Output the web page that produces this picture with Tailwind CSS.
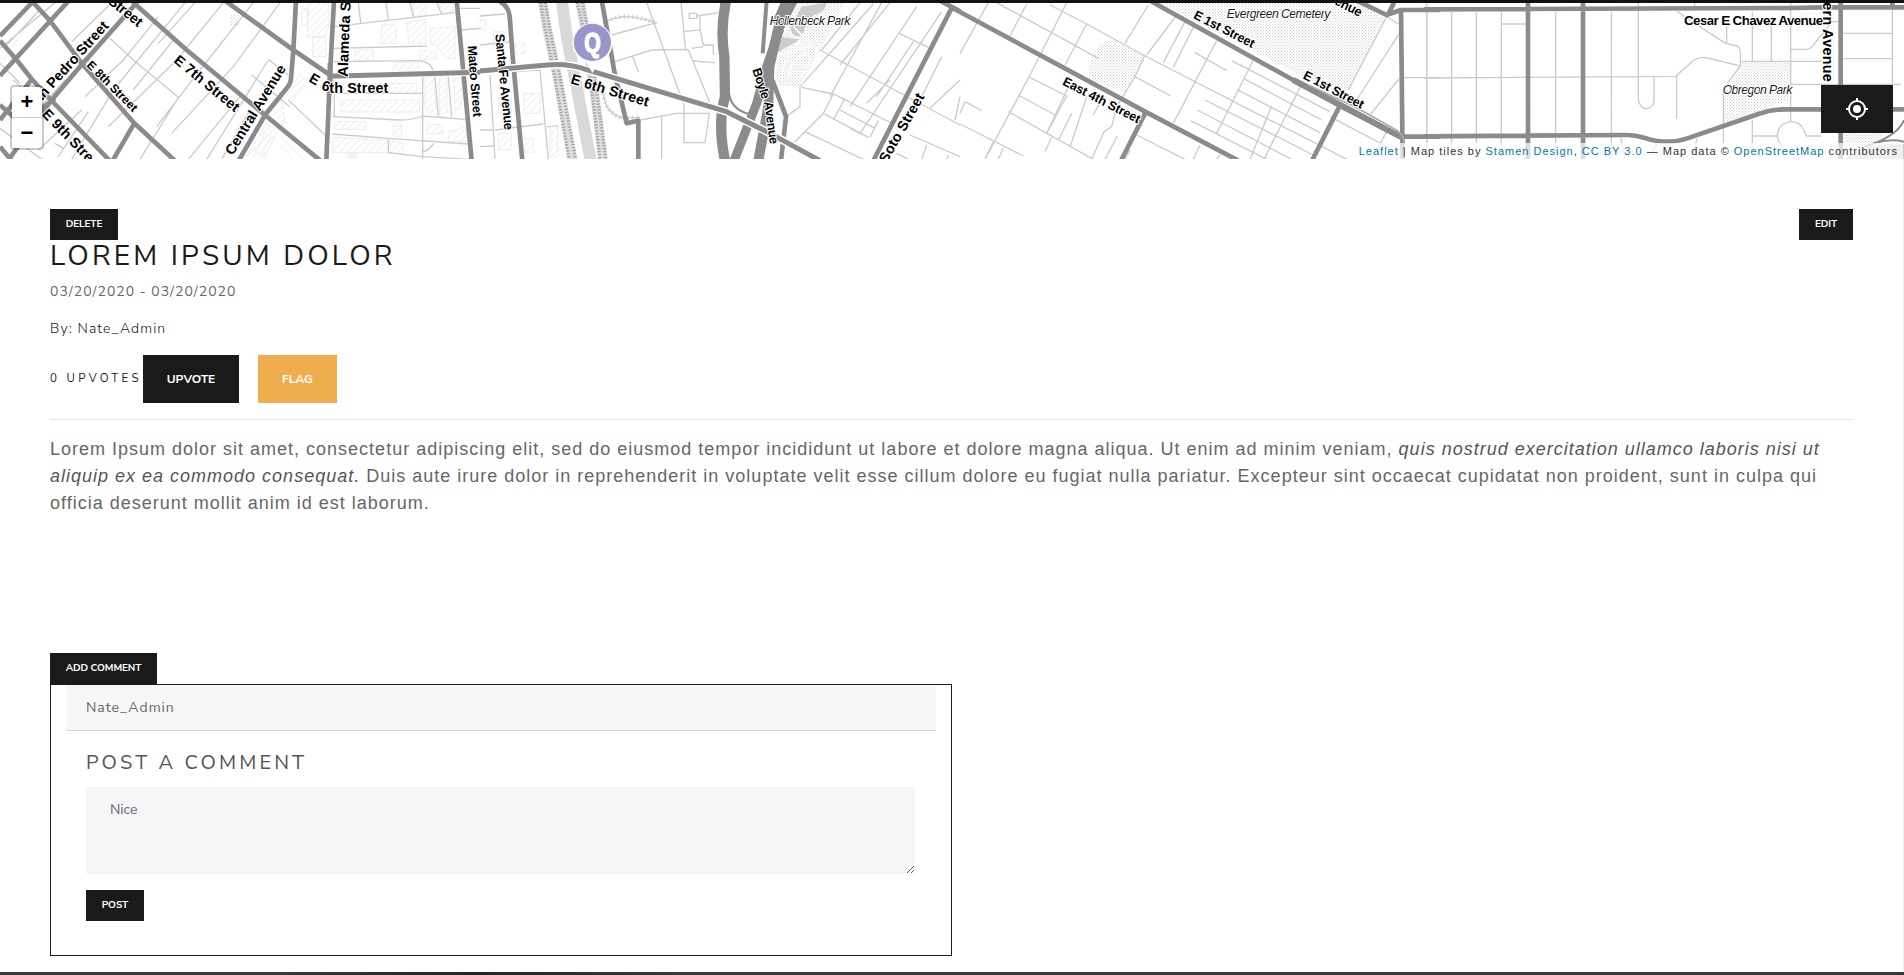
<!DOCTYPE html>
<html lang="en">
<head>
<meta charset="utf-8">
<title>Lorem Ipsum Dolor</title>
<script src="https://cdn.jsdelivr.net/npm/@tailwindcss/browser@4"></script>
</head>
<body class="h-[975px] overflow-hidden bg-white font-['Nunito_Sans',Lato,sans-serif] text-[#1a1a1a]">
<div class="flex h-[975px] flex-col border-r border-[#efefef]">
  <div class="h-[3px] w-[1904px] shrink-0 bg-[#111]"></div>

  <section class="relative h-[156px] w-[1904px] shrink-0 overflow-hidden">
    <svg class="block h-[156px] w-[1904px]" viewBox="0 3 1904 156" fill="none" font-family="'Liberation Sans', Arial, sans-serif">
      <defs>
        <pattern id="dots" width="9" height="9" patternUnits="userSpaceOnUse"><rect x="0" y="0" width="3" height="3" fill="#cfcfcf"/><rect x="4.5" y="4.5" width="3" height="3" fill="#cfcfcf"/></pattern>
        <pattern id="hatch" width="22" height="22" patternUnits="userSpaceOnUse"><path d="M-2 24L24 -2" stroke="#dcdcdc" stroke-width="2"/></pattern>
      </defs>
      <rect width="1904" height="162" fill="#fff"/>

      <!-- downtown -->
      <g transform="scale(.33333)">
        <g fill="url(#hatch)" stroke="#e6e6e6" stroke-width="2">
          <path d="M925 8H985V80L975 112H922ZM938 110H978V170H938ZM905 25H923V76H905ZM1145 75L1188 72V130H1142ZM1222 66L1278 58V130L1226 132ZM1290 85L1365 80V175H1335L1310 135H1292ZM1238 8H1278V45L1242 50ZM1318 10H1360V36H1322ZM1065 150H1120V180H1065ZM1180 188L1255 186V214H1180ZM1025 300H1258V336H1022ZM1275 230H1300L1308 325L1290 340L1275 325ZM1318 230H1340V350H1318ZM1360 235H1385V325L1365 330ZM1282 372L1328 374V402H1280ZM1345 395L1400 380V425H1345ZM1180 375H1205V408H1180ZM998 412L1165 420V458H998ZM1170 420L1210 430V460H1170ZM1003 250H1250V280H1003ZM1260 150L1310 158V178H1260ZM1003 365H1098V388H1003Z"/>
          <path d="M860 285L900 225L922 240L875 305M810 320L845 300L855 370L830 380M850 395L930 460M845 415L905 472M840 435L880 478M740 470L800 370L835 390L790 478M760 470L800 395M780 470L815 405M10 180L110 30M30 195L140 65"/>
        </g>
        <g stroke="#cbcbcb" stroke-width="4">
          <path d="M0 145L165 8M20 135L120 30M215 125L335 8M330 115L400 180L535 292M535 292L420 478M195 240L70 380M555 8L340 270L215 478M245 330L115 450M475 50L370 180L255 290M520 120L400 270M585 8L475 130M670 8L530 180L325 380M760 8L600 210L470 380M840 8L700 200L515 400M720 290L565 478M805 180L620 478M750 330L665 478M865 300L975 405M755 225L870 320M805 178L865 225M40 240L125 320M0 385L125 478M60 250L0 190M120 330L40 430M165 430L190 445M175 470L265 335"/>
          <path d="M1000 80L1365 38M1075 8L1082 68M1158 8L1165 58M1230 8L1240 50M1310 8L1325 42M1000 145L1282 138M1000 185L1255 182Q1295 185 1300 215M1268 225V478M1003 280H1268M998 350L1200 360Q1240 360 1268 348L1395 358M998 402L1165 415L1405 432M1165 418V458L1268 470L1410 478M1305 230L1315 350M1345 230L1355 350M1003 232V350M1270 455Q1290 450 1300 430M1375 25H1440M1380 90L1440 85"/>
        </g>
        <path d="M690 45h30v30h-30zM1042 460h30v18h-30z" fill="url(#dots)"/>
        <g stroke="#8b8b8b" stroke-width="14" stroke-linejoin="round">
          <path d="M98 6L0 108M203 6L0 227M98 6L150 62L245 190L403 370L528 485M0 122L50 180L95 237L150 297L332 485M412 6L240 200L155 300L25 480M95 238L0 360M0 440L35 482M0 315L40 350M398 6L560 150L795 345L965 485M404 368L338 482M675 2L880 150L990 225M888 2L880 152L873 235Q873 250 860 265L795 345L716 482M1002 2L990 225L979 482M1370 2L1390 215L1415 482M165 295L120 330"/>
          <path d="M985 229L1440 217" stroke="#fff" stroke-width="20"/>
          <path d="M985 229L1440 217M990 190V260" stroke-width="15"/>
        </g>
      </g>

      <!-- river and Boyle Heights -->
      <g transform="translate(480 0) scale(.33333)">
        <g stroke="#cbcbcb" stroke-width="4">
          <path d="M500 8L610 310M603 8L617 150L625 150L690 310M405 185L515 150L620 148M395 105L530 68M458 170L475 215M628 40h22v15h-22zM650 48L715 38M610 95L660 90V48M660 90L670 135L700 135V165M635 145L670 140M640 183L705 188M480 360L590 340L688 340L675 428H612V310M545 350V478M0 48L75 42M0 135L90 125M30 225L45 478M45 390L190 372M180 210L205 478M0 440L45 438M200 380L235 378M0 390H40M100 215L180 210"/>
          <path d="M1140 8L1025 150M1180 12L1045 165L960 260M1230 8L1080 195M1310 20L1110 320M1385 35L1140 400L1110 385M1020 150L1440 375M1258 100L1345 142M1300 125L1190 290M1205 8L1050 290M1385 170L1310 320M1440 240L1350 325M960 260V320L918 350M965 262L1060 282L1240 372M1060 282L1030 340L930 440M1095 295L1060 360M1080 330L1185 385M1030 340L1165 412M975 395L1150 478M1195 362L1170 412M1290 405L1440 470M1340 435L1325 478M1405 465L1400 478M1250 460L1285 478M1440 290L1425 360M1230 240L1160 310"/>
          <path d="M748 285Q755 325 800 340Q825 345 820 372" stroke="#8b8b8b" stroke-width="6"/>
        </g>
        <g stroke="#e6e6e6" stroke-width="2" fill="url(#hatch)"><path d="M105 130h28v32h-28zM132 280H180V340H132ZM55 290h38v50h-38zM55 400h40v50h-40zM210 380h24v90h-24zM135 415h25v42h-25zM0 60h18v30H0zM40 95h35v50h-35z"/></g>
        <path d="M950 8L1092 8L1022 150L960 258H905L885 240L900 130Z" fill="url(#dots)"/>
        <path d="M965 20L1040 8Q1035 40 1000 45L980 70L965 110L940 105L930 85ZM905 112L960 118L890 160Z" fill="#ccc"/>
        <path d="M905 240Q905 195 925 170Q960 135 1010 140Q1015 180 965 250M925 235Q930 190 955 170Q985 155 990 180Q985 215 945 240M940 80L1000 140M890 165Q940 165 960 120" stroke="#fff" stroke-width="5"/>
        <path d="M188 8L200 80L232 230L278 482M300 8L315 85L345 290L370 482" stroke="#dedede" stroke-width="28"/>
        <path d="M182 8L194 80L224 230L268 482M196 8L208 80L240 230L288 482M292 8L310 85L338 290L360 482M308 8L322 85L352 290L378 482" stroke="#a2a2a2" stroke-width="10" stroke-dasharray="4 5"/>
        <path d="M245 2L262 120L290 260L332 482" stroke="#d9d9d9" stroke-width="36"/>
        <path d="M370 70Q430 30 530 70M370 280Q375 340 430 355L480 352" stroke="#c8c8c8" stroke-width="4"/>
        <path d="M370 70Q430 30 530 70M370 280Q375 340 430 355L480 352" stroke="#c8c8c8" stroke-width="13" stroke-dasharray="3 10"/>
        <g stroke="#8b8b8b" stroke-width="14" stroke-linejoin="round">
          <path d="M365 2L385 110L403 215L440 370L475 362V482"/>
          <path d="M60 5Q88 18 90 60L98 170L127 482"/>
          <path d="M860 2L848 160" stroke-width="12"/>
          <path d="M738 2Q720 90 733 170L735 290Q712 370 735 482" stroke-width="31"/>
          <path d="M938 2L895 85L868 200L865 320L835 482" stroke-width="30"/>
          <path d="M900 85L860 200L830 310L762 482" stroke-width="27"/>
          <path d="M926 2L895 75" stroke-width="40"/>
          <path d="M877 240L918 350L903 482M1416 22L1180 482M1380 2L1440 34"/>
          <path d="M0 213L200 195Q260 188 320 209L740 335L870 400L1020 482" stroke="#fff" stroke-width="24"/>
          <path d="M0 213L200 195Q260 188 320 209L740 335L870 400L1020 482" stroke-width="15"/>
        </g>
      </g>

      <!-- East 4th / East 1st -->
      <g transform="translate(960 0) scale(.33333)">
        <path d="M640 8H1200L1280 50L1165 270L1040 235L600 10ZM455 118L560 165L500 280L385 235L390 180L420 130Z" fill="url(#dots)"/>
        <g stroke="#cbcbcb" stroke-width="4">
          <path d="M85 8L0 160M200 12L150 108M320 8L210 225L75 478M110 8L275 98L415 175M270 15L380 72L550 165L890 340L1110 452L1160 478M380 72L315 195M565 15L495 130M555 165L525 230L470 320M650 45L560 165M675 65L610 188M702 78L640 202M770 122L640 370M880 180L770 400M815 182L1110 335M850 235L1085 360M830 268L1080 398M735 300L1060 465M712 330L995 478M692 362L920 478M705 158L800 212M525 230L632 288M1020 262L912 478M205 230L320 288L260 400M175 285L285 345M145 335L400 478M330 250L260 400M335 340L295 420M380 290L330 440M275 412L255 455M430 290L400 345M470 320L455 380L432 395L395 478M472 408L435 478M0 372L190 468M15 305L65 332M15 305L0 340M130 445L115 478M100 425L75 478M530 405L675 478M720 435L700 478M495 478L510 450M1315 72L1280 50L1165 270M1318 100L1190 300M1318 235L1230 345M1280 395L1235 478M1110 350L1300 450M935 318L870 478M780 465L770 478"/>
          <path d="M1400 8V430M1330 233H1440"/>
        </g>
        <g stroke="#8b8b8b" stroke-width="14" stroke-linejoin="round">
          <path d="M-30 20L0 36L560 337L835 482M570 2L1140 318L1328 414M558 335L483 482M1140 316L1056 482M1180 -3L1280 45L1322 30H1440M1302 8L1285 42M1323 25L1328 482M1328 410H1440"/>
          <path d="M1000 240L1325 412" stroke-width="18"/>
          <path d="M1045 255L1180 318L1300 385Q1330 400 1332 425" stroke="#a9a9a9" stroke-width="5"/>
        </g>
      </g>

      <!-- East LA grid -->
      <g transform="translate(1424 0) scale(.33333)">
        <path d="M950 185H1100V300L900 370V280L950 200ZM1258 400H1385L1350 435H1258Z" fill="url(#dots)"/>
        <g stroke="#cbcbcb" stroke-width="4">
          <path d="M8 35V478M83 35V478M157 35V478M232 35V478M395 35V478M562 35V478M0 234L755 229L805 184Q825 168 850 174L945 197M232 72H305M643 8V300Q650 326 667 326Q690 323 690 300V229M758 229V357M760 35Q840 90 905 130L940 138Q949 142 949 160V197L910 250M908 60V128M985 35V184M1042 75V184M1100 8V365M949 184H1192M1100 148H1145Q1160 148 1168 135L1225 65H1245M1100 253H1430M1258 100H1405M1258 176H1405M1405 8V253M812 8V20M898 280V430M985 360V430M985 408H1060M1192 408H1148L1140 392Q1130 365 1100 365Q1062 370 1060 408Q1062 430 1080 440M590 415L605 478M680 460L700 430M800 478L820 415"/>
        </g>
        <g stroke="#8b8b8b" stroke-width="14" stroke-linejoin="round">
          <path d="M0 28L1100 24L1200 22H1440M0 409L610 405Q635 405 660 413Q730 436 790 415L1010 340Q1040 329 1080 328H1440M312 2V482M477 2V482M1250 2V482M1405 2V22"/>
          <path d="M1320 440Q1420 410 1440 360M1350 430Q1400 415 1440 425" stroke-width="6"/>
        </g>
        <path d="M1310 445Q1380 425 1440 432V478H1260Z" fill="#ccc"/>
      </g>

      <!-- labels -->
      <g fill="#000" stroke="#fff" stroke-width="6" paint-order="stroke" font-weight="700" font-size="43" stroke-linejoin="round">
        <g transform="scale(.33333)">
          <text transform="translate(322 8) rotate(39)" textLength="118">Street</text>
          <text transform="translate(98 334) rotate(-47.9)" textLength="343" lengthAdjust="spacingAndGlyphs">San Pedro Street</text>
          <text transform="translate(258 197) rotate(45)" font-size="36" textLength="199">E 8th Street</text>
          <text transform="translate(519 185) rotate(39.5)" textLength="240">E 7th Street</text>
          <text transform="translate(124 344) rotate(46)" textLength="240">E 9th Street</text>
          <text transform="translate(698 468) rotate(-58.5)" textLength="308">Central Avenue</text>
          <text transform="translate(924 243) rotate(30)">E</text>
          <text transform="translate(962 268) rotate(20)">6</text>
          <text x="988" y="278" textLength="177">th Street</text>
          <text transform="translate(1043 231) rotate(-87.8)" textLength="322" lengthAdjust="spacingAndGlyphs">Alameda Street</text>
          <text transform="translate(1403 138) rotate(85.5)" font-size="38" textLength="214">Mateo Street</text>
        </g>
        <g transform="translate(480 0) scale(.33333)">
          <text transform="translate(46 103) rotate(84.5)" font-size="39" textLength="289">Santa Fe Avenue</text>
          <text transform="translate(270 250) rotate(16.8)" textLength="242">E 6th Street</text>
          <text transform="translate(817 209) rotate(72)" font-size="38" textLength="95">Boyle</text>
          <text transform="translate(852 306) rotate(82)" font-size="38" textLength="129">Avenue</text>
          <text transform="translate(1220 491) rotate(-60.3)" textLength="232">Soto Street</text>
        </g>
        <g transform="translate(960 0) scale(.33333)">
          <text transform="translate(305 253) rotate(27.3)" font-size="38" textLength="257">East 4th Street</text>
          <text transform="translate(698 53) rotate(27.2)" font-size="38" textLength="200">E 1st Street</text>
          <text transform="translate(1027 234) rotate(27.7)" font-size="38" textLength="200">E 1st Street</text>
          <text transform="translate(1081 -9) rotate(27)" font-size="39" textLength="132">Avenue</text>
        </g>
        <g transform="translate(1424 0) scale(.33333)">
          <text x="780" y="75" font-size="41" textLength="418">Cesar E Chavez Avenue</text>
          <text transform="translate(1198 -87) rotate(90)" textLength="332">Eastern Avenue</text>
        </g>
        <g font-style="italic" font-weight="400" font-size="37" fill="#1a1a1a">
          <text transform="translate(480 0) scale(.33333)" x="869" y="74" textLength="242">Hollenbeck Park</text>
          <text transform="translate(960 0) scale(.33333)" x="800" y="54" textLength="311">Evergreen Cemetery</text>
          <text transform="translate(1424 0) scale(.33333)" x="896" y="282" textLength="209">Obregon Park</text>
        </g>
      </g>

      <!-- pin -->
      <path d="M592.5 73L586 62A20 20 0 1 1 599 62Z" fill="#fff"/>
      <circle cx="592.4" cy="42.4" r="18.6" fill="#9896cb"/>
      <text x="592.4" y="51.5" text-anchor="middle" font-size="27" font-weight="700" font-family="'Liberation Sans'" fill="#fff" stroke="#fff" stroke-width="1.4" textLength="16.5" lengthAdjust="spacingAndGlyphs">Q</text>
    </svg>

    <div class="absolute left-[10px] top-[82px] w-[34px] rounded border-2 border-black/20 bg-clip-padding text-center font-['Liberation_Sans',sans-serif] text-[22px] font-bold leading-[30px] text-black">
      <div class="h-[31px] rounded-t-sm border-b border-[#ccc] bg-white">+</div>
      <div class="h-[30px] rounded-b-sm bg-white leading-[29px]">−</div>
    </div>

    <button class="absolute left-[1821px] top-[82px] flex h-12 w-[72px] items-center justify-center bg-[#1a1a1a]">
      <svg class="size-[22px]" viewBox="0 0 22 22" fill="none" stroke="#fff" stroke-width="2"><circle cx="11" cy="11" r="8"/><path d="M11 0v3M11 19v3M0 11h3M19 11h3"/><circle cx="11" cy="11" r="4" fill="#fff" stroke="none"/></svg>
    </button>

    <div class="absolute bottom-0 right-[1px] h-4 whitespace-nowrap bg-white/70 px-[5px] font-['Liberation_Sans',sans-serif] text-[11px] leading-4 tracking-[1px] text-[#333]"><a class="text-[#0078a8]">Leaflet</a> | Map tiles by <a class="text-[#0078a8]">Stamen Design</a>, <a class="text-[#0078a8]">CC BY 3.0</a> — Map data © <a class="text-[#0078a8]">OpenStreetMap</a> contributors</div>
  </section>

  <main class="flex flex-col px-[50px] pt-[50px]">
    <div class="flex w-[1803px] justify-between">
      <button class="h-[31px] w-[68px] bg-[#1a1a1a] text-[10px] font-bold tracking-[-0.1px] text-white">DELETE</button>
      <button class="h-[31px] w-[54px] bg-[#1a1a1a] text-[10px] font-bold tracking-[-0.1px] text-white">EDIT</button>
    </div>
    <h1 class="h-[38px] whitespace-nowrap text-[28px] leading-[33px] tracking-[3.15px]">LOREM IPSUM DOLOR</h1>
    <p class="h-[37px] text-[14px] leading-[28px] tracking-[1px] text-[#666]">03/20/2020 - 03/20/2020</p>
    <p class="h-[40px] text-[14px] font-light leading-[28px] tracking-[1.1px]">By: Nate_Admin</p>
    <div class="flex h-12 items-center">
      <span class="w-[93px] whitespace-nowrap pb-px text-[11.5px] tracking-[3.3px]">0 UPVOTES</span>
      <button class="h-12 w-24 bg-[#1a1a1a] text-[12px] font-bold text-white">UPVOTE</button>
      <button class="ml-[19px] h-12 w-[79px] bg-[#f0ad4e] text-[12px] font-bold text-white">FLAG</button>
    </div>
    <hr class="mt-4 w-[1803px] border-[#e3e3e3]">
    <p class="mt-4 w-[1803px] whitespace-nowrap font-['Liberation_Sans',sans-serif] text-[18px] leading-[27px] tracking-[1px] text-[#666]">Lorem Ipsum dolor sit amet, consectetur adipiscing elit, sed do eiusmod tempor incididunt ut labore et dolore magna aliqua. Ut enim ad minim veniam, <em class="text-[#555]">quis nostrud exercitation ullamco laboris nisi ut<br>aliquip ex ea commodo consequat.</em> Duis aute irure dolor in reprehenderit in voluptate velit esse cillum dolore eu fugiat nulla pariatur. Excepteur sint occaecat cupidatat non proident, sunt in culpa qui<br>officia deserunt mollit anim id est laborum.</p>

    <button class="mt-[136px] h-[31px] w-[107px] whitespace-nowrap bg-[#1a1a1a] text-[10px] font-bold tracking-[-0.1px] text-white">ADD COMMENT</button>
    <section class="h-[272px] w-[902px] border border-[#1a1a1a] px-[15px]">
      <div class="h-[46px] border-b border-[#d5d5d5] bg-[#f7f7f7] px-5 text-[14px] leading-[45px] tracking-[1px] text-[#666]">Nate_Admin</div>
      <form class="flex flex-col px-5">
        <h2 class="mt-5 h-9 text-[20px] leading-6 tracking-[3.1px] text-[#555]">POST A COMMENT</h2>
        <textarea class="h-[87px] w-[829px] resize bg-[#f6f6f8] px-6 pt-[13px] text-[14px] leading-5 text-[#666]">Nice</textarea>
        <button type="button" class="mt-4 h-[31px] w-[58px] bg-[#1a1a1a] text-[10px] font-bold text-white">POST</button>
      </form>
    </section>
  </main>
  <div class="mt-auto h-[3px] w-[1904px] shrink-0 bg-linear-to-r from-[#3b3836] from-15% via-[#262425] via-25% to-[#3b3836] to-35%"></div>
</div>
</body>
</html>
